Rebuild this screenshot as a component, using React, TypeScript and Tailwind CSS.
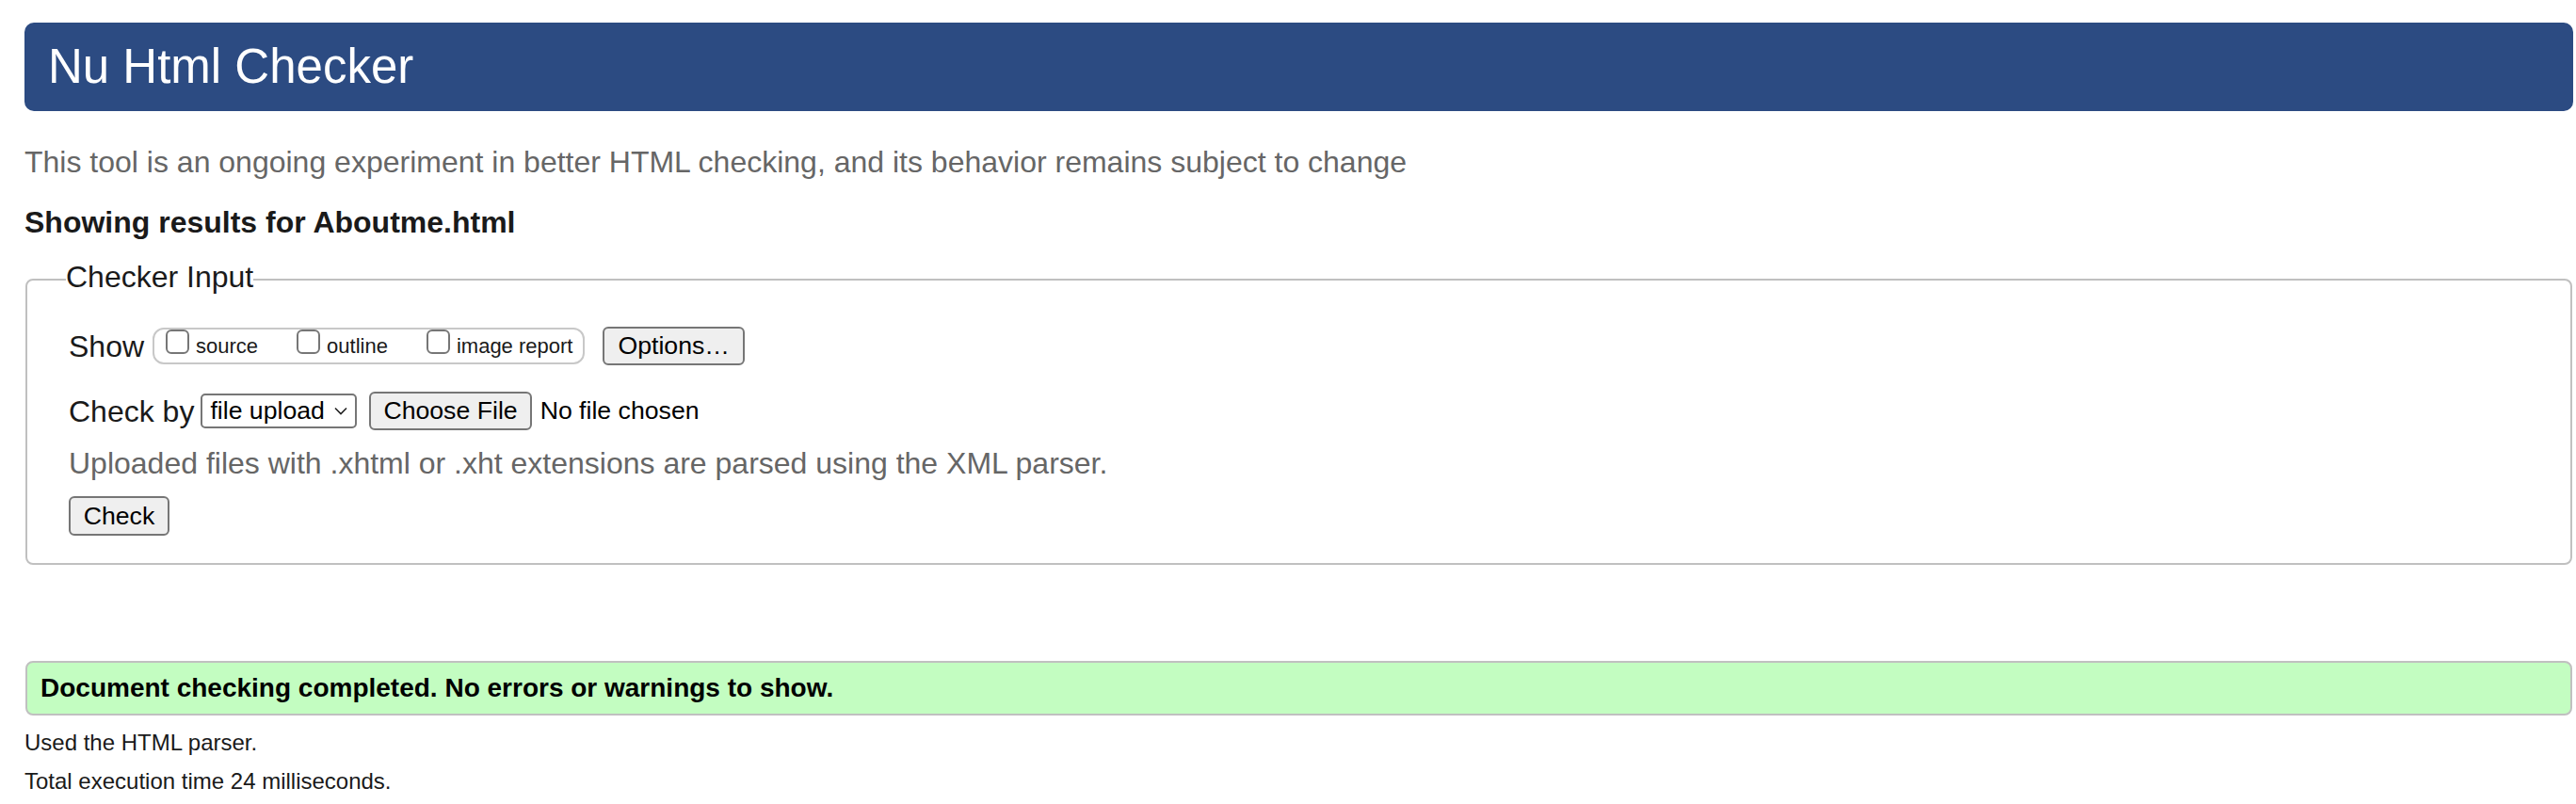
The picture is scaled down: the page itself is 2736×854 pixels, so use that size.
export default function App() {
  return (
    <div className="min-h-screen bg-white pl-[26px] pr-[3px] pt-[24px] font-['Liberation_Sans',Arial,sans-serif] text-[#1a1a1a]">
      <h1 className="flex h-[94px] items-center rounded-[10px] bg-[#2c4b82] px-[25px] text-[51px] leading-normal font-normal text-white">
        Nu Html Checker
      </h1>

      <p className="mt-[36px] text-[32px] leading-[36px] text-[#666666]">
        This tool is an ongoing experiment in better HTML checking, and its behavior remains subject to change
      </p>

      <p className="mt-[28px] text-[32px] leading-[36px] font-bold text-[#1a1a1a]">
        Showing results for Aboutme.html
      </p>

      <fieldset className="mx-[1px] mt-[25px] rounded-[8px] border-2 border-[#c0c0c0] pt-[32px] pb-[29px] pl-[44px]">
        <legend className="relative -top-[3px] -ml-[3px] text-[32px] leading-[36px] text-[#1a1a1a]">
          Checker Input
        </legend>

        {/* show row */}
        <div className="flex h-[41px] items-center">
          <span className="text-[32px] leading-[36px]">Show</span>
          <div className="ml-[9px] flex h-[39px] items-start rounded-[12px] border-2 border-[#c8c8c8] pl-[12px] pr-[11px]">
            <input type="checkbox" className="h-[26px] w-[25px] appearance-none rounded-[6px] border-2 border-[#767676] bg-white" />
            <span className="ml-[7px] mt-[7px] text-[22px] leading-[22px]">source</span>
            <input type="checkbox" className="ml-[41px] h-[26px] w-[25px] appearance-none rounded-[6px] border-2 border-[#767676] bg-white" />
            <span className="ml-[7px] mt-[7px] text-[22px] leading-[22px]">outline</span>
            <input type="checkbox" className="ml-[41px] h-[26px] w-[25px] appearance-none rounded-[6px] border-2 border-[#767676] bg-white" />
            <span className="ml-[7px] mt-[7px] text-[22px] leading-[22px]">image report</span>
          </div>
          <button className="ml-[19px] h-[41px] rounded-[6px] border-2 border-[#767676] bg-[#efefef] px-[14px] text-[26.67px] leading-none text-black">
            Options…
          </button>
        </div>

        {/* check by row */}
        <div className="mt-[28px] flex h-[41px] items-center">
          <span className="text-[32px] leading-[36px]">Check by</span>
          <div className="ml-[7px] flex h-[37px] w-[166px] items-center rounded-[5px] border-2 border-[#767676] bg-white pl-[8px] pr-[8px] text-[26.67px] leading-none text-black">
            <span>file upload</span>
            <svg className="ml-auto" width="14" height="9" viewBox="0 0 14 9" fill="none">
              <path d="M1 1.5 L7 7.5 L13 1.5" stroke="#222" strokeWidth="1.6" />
            </svg>
          </div>
          <button className="ml-[13px] h-[41px] rounded-[6px] border-2 border-[#767676] bg-[#efefef] px-[13px] text-[26.67px] leading-none text-black">
            Choose File
          </button>
          <span className="ml-[9px] text-[26.67px] leading-none text-black">No file chosen</span>
        </div>

        <p className="mt-[17px] text-[32px] leading-[36px] text-[#666666]">
          Uploaded files with .xhtml or .xht extensions are parsed using the XML parser.
        </p>

        <button className="mt-[17px] h-[42px] w-[107px] rounded-[6px] border-2 border-[#767676] bg-[#efefef] text-[26.67px] leading-none text-black">
          Check
        </button>
      </fieldset>

      <div className="mx-[1px] mt-[102px] flex h-[58px] items-center rounded-[8px] border-2 border-[#c0c0c0] bg-[#c3fdc1] pl-[14px]">
        <p className="text-[28px] font-bold text-black">
          Document checking completed. No errors or warnings to show.
        </p>
      </div>

      <p className="mt-[8px] text-[24px] leading-[41px] text-[#1a1a1a]">Used the HTML parser.</p>
      <p className="text-[24px] leading-[41px] text-[#1a1a1a]">Total execution time 24 milliseconds.</p>
    </div>
  );
}
